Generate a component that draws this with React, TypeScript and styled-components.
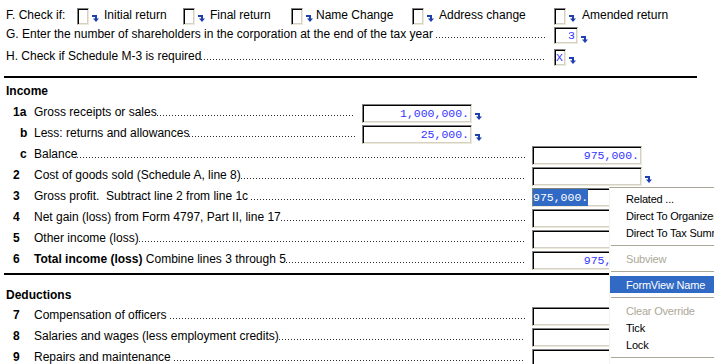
import React from 'react';
import styled, { createGlobalStyle } from 'styled-components';

const GlobalStyle = createGlobalStyle`
  html, body {
    margin: 0;
    padding: 0;
    background: #ffffff;
  }
  body {
    font-family: "Liberation Sans", Arial, sans-serif;
    font-size: 12px;
    color: #000000;
  }
`;

const Page = styled.div`
  position: relative;
  box-sizing: border-box;
  width: 714px;
  height: 364px;
  padding: 8px 0 0 6px;
  overflow: hidden;
`;

const Header = styled.div`
  display: grid;
  grid-template-rows: 19px 22px 20px;
`;

const HeaderRow = styled.div`
  display: flex;
  align-items: flex-start;
  line-height: 15px;
  white-space: pre;
`;

const CheckCaption = styled.span`
  flex: none;
  width: 71px;
`;

const CheckGroup = styled.div<{ $w?: number }>`
  display: flex;
  align-items: flex-start;
  flex: none;
  width: ${(p) => (p.$w ? `${p.$w}px` : 'auto')};
`;

const CheckLabel = styled.span<{ $gap?: number }>`
  margin-left: ${(p) => p.$gap ?? 5}px;
`;

const SunkenBox = styled.div<{ $w: number; $h?: number; $align?: 'left' | 'center' | 'right'; $ml?: number }>`
  box-sizing: border-box;
  flex: none;
  width: ${(p) => p.$w}px;
  height: ${(p) => p.$h ?? 17}px;
  margin-left: ${(p) => p.$ml ?? 0}px;
  padding: ${(p) => (p.$align === 'left' ? '0' : '0 2px 0 1px')};
  border: 1px solid;
  border-color: #808080 #ece9d8 #ece9d8 #808080;
  box-shadow: inset 1px 1px 0 #000000, inset -1px -1px 0 #d4d0c8;
  background: #ffffff;
  font-family: "Liberation Mono", "Courier New", monospace;
  font-size: 11.5px;
  line-height: ${(p) => (p.$h ?? 17) - 2}px;
  color: #3333ff;
  text-align: ${(p) => p.$align ?? 'right'};
  white-space: nowrap;
  overflow: hidden;
`;

const Selection = styled.span`
  display: inline-block;
  background: #316ac5;
  color: #ffffff;
`;

const ArrowSvg = styled.svg<{ $top?: number }>`
  flex: none;
  margin: ${(p) => p.$top ?? 9}px 0 0 3px;
  color: #1e3fae;
`;

const DropArrow = ({ top }: { top?: number }) => (
  <ArrowSvg $top={top} width="7" height="7" viewBox="0 0 7 7">
    <path d="M0 0h5v4H3V2H0z" fill="currentColor" />
    <path d="M1 3.5h6L4 7z" fill="currentColor" />
  </ArrowSvg>
);

const Desc = styled.div<{ $w: number }>`
  display: flex;
  flex: none;
  width: ${(p) => p.$w}px;
  white-space: pre;
`;

const Leader = styled.span<{ $top?: number }>`
  flex: 1;
  height: 1px;
  margin-top: ${(p) => p.$top ?? 11}px;
  background-image: linear-gradient(to right, #2a2a2a 1px, transparent 1px);
  background-size: 3px 1px;
`;

const Rule = styled.div<{ $top: number }>`
  width: 693px;
  height: 2px;
  margin: ${(p) => p.$top}px 0 0 -2px;
  background: #000000;
`;

const SectionTitle = styled.div<{ $top: number; $bottom: number }>`
  font-weight: bold;
  line-height: 16px;
  padding: ${(p) => p.$top}px 0 ${(p) => p.$bottom}px;
`;

const LineRow = styled.div`
  display: flex;
  align-items: flex-start;
  height: 21px;
  line-height: 16px;
`;

const LineNum = styled.span<{ $sub?: boolean }>`
  flex: none;
  box-sizing: border-box;
  width: 28px;
  padding-left: ${(p) => (p.$sub ? 14 : 7)}px;
  font-weight: bold;
`;

const Menu = styled.div`
  position: absolute;
  left: 609px;
  top: 187px;
  box-sizing: border-box;
  width: 140px;
  padding: 2px 0;
  background: #ffffff;
  border-top: 1px solid #aca899;
  border-left: 1px solid #f4f3ee;
  font-family: "Liberation Sans", Tahoma, sans-serif;
  font-size: 11px;
  letter-spacing: -0.2px;
`;

const MenuItem = styled.div<{ $disabled?: boolean; $active?: boolean }>`
  height: 16px;
  padding: 1px 0 0 16px;
  line-height: 17px;
  white-space: nowrap;
  color: ${(p) => (p.$active ? '#ffffff' : p.$disabled ? '#aca899' : '#000000')};
  background: ${(p) => (p.$active ? '#316ac5' : 'transparent')};
`;

const MenuSep = styled.div`
  height: 9px;
  display: flex;
  align-items: center;
  padding-left: 1px;

  &::after {
    content: '';
    flex: 1;
    height: 1px;
    background: #aca899;
  }
`;

type Line = {
  num: string;
  sub?: boolean;
  text: React.ReactNode;
  short?: boolean;
  value?: string;
  arrow?: boolean;
  selected?: boolean;
};

const income: Line[] = [
  { num: '1a', text: 'Gross receipts or sales', short: true, value: '1,000,000.', arrow: true },
  { num: 'b', sub: true, text: 'Less: returns and allowances', short: true, value: '25,000.', arrow: true },
  { num: 'c', sub: true, text: 'Balance', value: '975,000.' },
  { num: '2', text: 'Cost of goods sold (Schedule A, line 8)', arrow: true },
  { num: '3', text: 'Gross profit.  Subtract line 2 from line 1c ', value: '975,000.', selected: true },
  { num: '4', text: 'Net gain (loss) from Form 4797, Part II, line 17' },
  { num: '5', text: 'Other income (loss)' },
  {
    num: '6',
    text: (
      <>
        <b>Total income (loss)</b> Combine lines 3 through 5
      </>
    ),
    value: '975,000.',
  },
];

const deductions: Line[] = [
  { num: '7', text: 'Compensation of officers ' },
  { num: '8', text: 'Salaries and wages (less employment credits)' },
  { num: '9', text: 'Repairs and maintenance ' },
];

const checks = [
  { label: 'Initial return', w: 106 },
  { label: 'Final return', w: 108 },
  { label: 'Name Change', w: 121, gap: 3 },
  { label: 'Address change', w: 142 },
  { label: 'Amended return', gap: 6 },
];

const FormLine = ({ line }: { line: Line }) => (
  <LineRow>
    <LineNum $sub={line.sub}>{line.num}</LineNum>
    <Desc $w={line.short ? 321 : 491}>
      <span>{line.text}</span>
      <Leader />
    </Desc>
    <SunkenBox $w={110} $h={19} $ml={7} $align={line.selected ? 'left' : 'right'}>
      {line.selected ? <Selection>{line.value}</Selection> : line.value}
    </SunkenBox>
    {line.arrow && <DropArrow />}
  </LineRow>
);

const App = () => {
  return (
    <>
      <GlobalStyle />
      <Page>
        <Header>
          <HeaderRow>
            <CheckCaption>F. Check if:</CheckCaption>
            {checks.map((c) => (
              <CheckGroup key={c.label} $w={c.w}>
                <SunkenBox $w={12} />
                <DropArrow top={7} />
                <CheckLabel $gap={c.gap}>{c.label}</CheckLabel>
              </CheckGroup>
            ))}
          </HeaderRow>
          <HeaderRow>
            <Desc $w={539}>
              <span>G. Enter the number of shareholders in the corporation at the end of the tax year </span>
              <Leader $top={10} />
            </Desc>
            <SunkenBox $w={24} $ml={9}>
              3
            </SunkenBox>
            <DropArrow top={9} />
          </HeaderRow>
          <HeaderRow>
            <Desc $w={539}>
              <span>H. Check if Schedule M-3 is required</span>
              <Leader $top={10} />
            </Desc>
            <SunkenBox $w={12} $ml={9} $align="center">
              X
            </SunkenBox>
            <DropArrow top={8} />
          </HeaderRow>
        </Header>

        <Rule $top={7} />
        <SectionTitle $top={5} $bottom={5}>
          Income
        </SectionTitle>
        {income.map((l) => (
          <FormLine key={l.num} line={l} />
        ))}

        <Rule $top={1} />
        <SectionTitle $top={12} $bottom={4}>
          Deductions
        </SectionTitle>
        {deductions.map((l) => (
          <FormLine key={l.num} line={l} />
        ))}

        <Menu>
          <MenuItem>Related ...</MenuItem>
          <MenuItem>Direct To Organizer</MenuItem>
          <MenuItem>Direct To Tax Summary</MenuItem>
          <MenuSep />
          <MenuItem $disabled>Subview</MenuItem>
          <MenuSep />
          <MenuItem $active>FormView Name</MenuItem>
          <MenuSep />
          <MenuItem $disabled>Clear Override</MenuItem>
          <MenuItem>Tick</MenuItem>
          <MenuItem>Lock</MenuItem>
          <MenuSep />
        </Menu>
      </Page>
    </>
  );
};

export default App;
